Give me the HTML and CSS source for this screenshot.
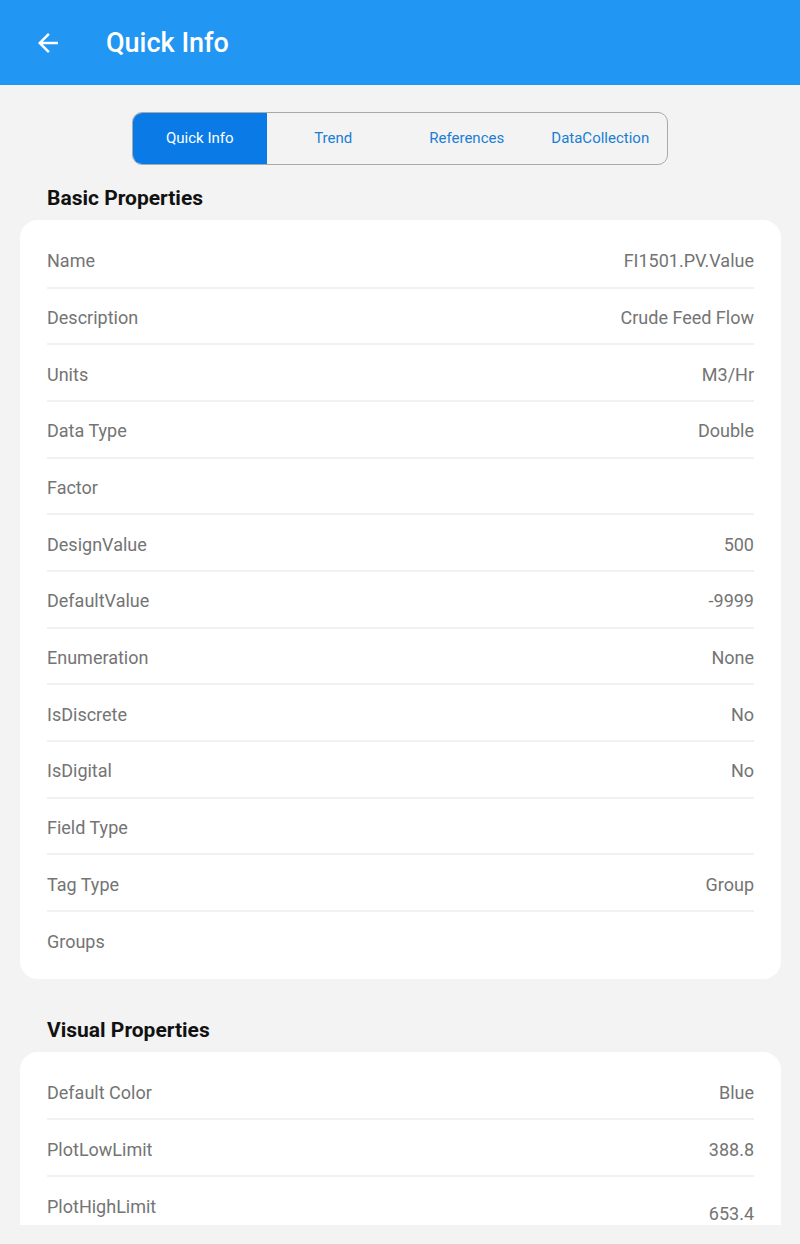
FILE: index.html
```html
<!DOCTYPE html>
<html>
<head>
<meta charset="utf-8">
<link rel="stylesheet" href="styles.css">
</head>
<body>
<div class="screen">
  <header class="appbar">
    <svg class="back" viewBox="0 0 24 24" width="30" height="30"><path fill="#fff" d="M20 11H7.83l5.59-5.59L12 4l-8 8 8 8 1.41-1.41L7.83 13H20v-2z"/></svg>
    <h1 class="title">Quick Info</h1>
  </header>
  <main class="content">
    <div class="segments">
      <div class="seg active">Quick Info</div>
      <div class="seg">Trend</div>
      <div class="seg">References</div>
      <div class="seg">DataCollection</div>
    </div>
    <h2 class="section">Basic Properties</h2>
    <div class="card">
      <div class="row"><span>Name</span><span>FI1501.PV.Value</span></div>
      <div class="row"><span>Description</span><span>Crude Feed Flow</span></div>
      <div class="row"><span>Units</span><span>M3/Hr</span></div>
      <div class="row"><span>Data Type</span><span>Double</span></div>
      <div class="row"><span>Factor</span><span></span></div>
      <div class="row"><span>DesignValue</span><span>500</span></div>
      <div class="row"><span>DefaultValue</span><span>-9999</span></div>
      <div class="row"><span>Enumeration</span><span>None</span></div>
      <div class="row"><span>IsDiscrete</span><span>No</span></div>
      <div class="row"><span>IsDigital</span><span>No</span></div>
      <div class="row"><span>Field Type</span><span></span></div>
      <div class="row"><span>Tag Type</span><span>Group</span></div>
      <div class="row"><span>Groups</span><span></span></div>
    </div>
    <h2 class="section second">Visual Properties</h2>
    <div class="card">
      <div class="row"><span>Default Color</span><span>Blue</span></div>
      <div class="row"><span>PlotLowLimit</span><span>388.8</span></div>
      <div class="row"><span>PlotHighLimit</span><span class="low">653.4</span></div>
    </div>
  </main>
</div>
</body>
</html>
```

FILE: styles.css
```css
html, body {
  margin: 0;
  padding: 0;
  background: #f3f3f3;
}
body {
  font-family: Roboto, "Liberation Sans", sans-serif;
}
.screen {
  width: 800px;
  height: 1225px;
  overflow: hidden;
  background: #f3f3f3;
}
.appbar {
  height: 85px;
  background: #2196f3;
  display: flex;
  align-items: center;
  padding-left: 33px;
  box-sizing: border-box;
}
.back {
  display: block;
}
.title {
  margin: 0 0 0 43px;
  color: #fff;
  font-size: 27px;
  font-weight: 500;
  line-height: 30px;
}
.content {
  padding: 27px 19px 0 20px;
}
.segments {
  width: 536px;
  height: 53px;
  margin: 0 auto 0 112px;
  box-sizing: border-box;
  border: 1px solid #a9a9a9;
  border-radius: 10px;
  display: flex;
  overflow: hidden;
}
.seg {
  flex: 1;
  display: flex;
  align-items: center;
  justify-content: center;
  padding-bottom: 2px;
  font-size: 15px;
  color: #1a7ed4;
}
.seg.active {
  background: #0a7be6;
  color: #fff;
}
.section {
  margin: 21px 0 10px 27px;
  font-size: 21px;
  line-height: 24px;
  font-weight: 700;
  color: #111;
}
.section.second {
  margin-top: 39px;
}
.card {
  background: #fff;
  border-radius: 18px;
  padding: 12px 27px 10px 27px;
}
.row {
  height: 56.67px;
  box-sizing: border-box;
  border-bottom: 2px solid #f1f1f1;
  display: flex;
  align-items: center;
  justify-content: space-between;
  padding-top: 3px;
  font-size: 18px;
  color: #747474;
}
.row:last-child {
  border-bottom: none;
}
.low {
  position: relative;
  top: 7px;
}
```
